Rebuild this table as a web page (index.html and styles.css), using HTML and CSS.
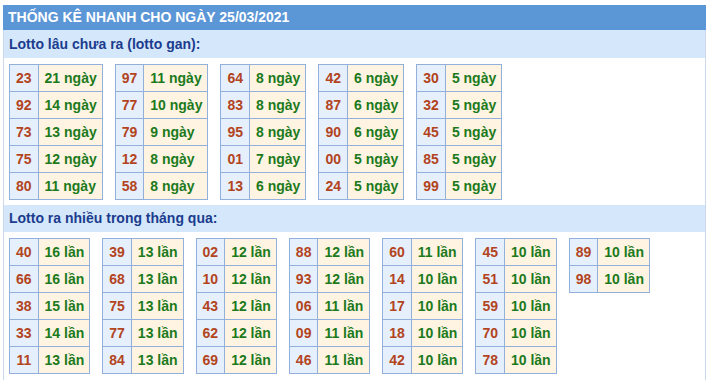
FILE: index.html
```html
<!DOCTYPE html>
<html lang="vi">
<head>
<meta charset="utf-8">
<link rel="stylesheet" href="styles.css">
</head>
<body>
<div class="box">
  <div class="title">THỐNG KÊ NHANH CHO NGÀY 25/03/2021</div>
  <div class="sub first">Lotto lâu chưa ra (lotto gan):</div>
  <div class="tables">
    <table><tr><td class="n">23</td><td class="v">21 ngày</td></tr><tr><td class="n">92</td><td class="v">14 ngày</td></tr><tr><td class="n">73</td><td class="v">13 ngày</td></tr><tr><td class="n">75</td><td class="v">12 ngày</td></tr><tr><td class="n">80</td><td class="v">11 ngày</td></tr></table>
    <table><tr><td class="n">97</td><td class="v">11 ngày</td></tr><tr><td class="n">77</td><td class="v">10 ngày</td></tr><tr><td class="n">79</td><td class="v">9 ngày</td></tr><tr><td class="n">12</td><td class="v">8 ngày</td></tr><tr><td class="n">58</td><td class="v">8 ngày</td></tr></table>
    <table><tr><td class="n">64</td><td class="v">8 ngày</td></tr><tr><td class="n">83</td><td class="v">8 ngày</td></tr><tr><td class="n">95</td><td class="v">8 ngày</td></tr><tr><td class="n">01</td><td class="v">7 ngày</td></tr><tr><td class="n">13</td><td class="v">6 ngày</td></tr></table>
    <table><tr><td class="n">42</td><td class="v">6 ngày</td></tr><tr><td class="n">87</td><td class="v">6 ngày</td></tr><tr><td class="n">90</td><td class="v">6 ngày</td></tr><tr><td class="n">00</td><td class="v">5 ngày</td></tr><tr><td class="n">24</td><td class="v">5 ngày</td></tr></table>
    <table><tr><td class="n">30</td><td class="v">5 ngày</td></tr><tr><td class="n">32</td><td class="v">5 ngày</td></tr><tr><td class="n">45</td><td class="v">5 ngày</td></tr><tr><td class="n">85</td><td class="v">5 ngày</td></tr><tr><td class="n">99</td><td class="v">5 ngày</td></tr></table>
  </div>
  <div class="sub">Lotto ra nhiều trong tháng qua:</div>
  <div class="tables">
    <table><tr><td class="n">40</td><td class="v">16 lần</td></tr><tr><td class="n">66</td><td class="v">16 lần</td></tr><tr><td class="n">38</td><td class="v">15 lần</td></tr><tr><td class="n">33</td><td class="v">14 lần</td></tr><tr><td class="n">11</td><td class="v">13 lần</td></tr></table>
    <table><tr><td class="n">39</td><td class="v">13 lần</td></tr><tr><td class="n">68</td><td class="v">13 lần</td></tr><tr><td class="n">75</td><td class="v">13 lần</td></tr><tr><td class="n">77</td><td class="v">13 lần</td></tr><tr><td class="n">84</td><td class="v">13 lần</td></tr></table>
    <table><tr><td class="n">02</td><td class="v">12 lần</td></tr><tr><td class="n">10</td><td class="v">12 lần</td></tr><tr><td class="n">43</td><td class="v">12 lần</td></tr><tr><td class="n">62</td><td class="v">12 lần</td></tr><tr><td class="n">69</td><td class="v">12 lần</td></tr></table>
    <table><tr><td class="n">88</td><td class="v">12 lần</td></tr><tr><td class="n">93</td><td class="v">12 lần</td></tr><tr><td class="n">06</td><td class="v">11 lần</td></tr><tr><td class="n">09</td><td class="v">11 lần</td></tr><tr><td class="n">46</td><td class="v">11 lần</td></tr></table>
    <table><tr><td class="n">60</td><td class="v">11 lần</td></tr><tr><td class="n">14</td><td class="v">10 lần</td></tr><tr><td class="n">17</td><td class="v">10 lần</td></tr><tr><td class="n">18</td><td class="v">10 lần</td></tr><tr><td class="n">42</td><td class="v">10 lần</td></tr></table>
    <table><tr><td class="n">45</td><td class="v">10 lần</td></tr><tr><td class="n">51</td><td class="v">10 lần</td></tr><tr><td class="n">59</td><td class="v">10 lần</td></tr><tr><td class="n">70</td><td class="v">10 lần</td></tr><tr><td class="n">78</td><td class="v">10 lần</td></tr></table>
    <table><tr><td class="n">89</td><td class="v">10 lần</td></tr><tr><td class="n">98</td><td class="v">10 lần</td></tr></table>
  </div>
</div>
</body>
</html>
```
FILE: styles.css
```css
html, body {
  margin: 0;
  padding: 0;
  background: #fff;
}
body {
  font-family: "Liberation Sans", Arial, sans-serif;
  font-size: 14px;
  font-weight: bold;
}
.box {
  margin: 5px 0 0 3px;
  width: 701px;
  height: 380px;
  border-left: 1px solid #c9d8ec;
  border-right: 1px solid #c9d8ec;
}
.title {
  background: #5b96d6;
  color: #fff;
  height: 25px;
  line-height: 25px;
  padding-left: 5px;
  margin: 0 -1px;
}
.sub {
  background: #d5e8fb;
  color: #1b3c8e;
  height: 27px;
  line-height: 27px;
  padding-left: 5px;
}
.sub.first {
  height: 28px;
  line-height: 28px;
}
.tables {
  display: flex;
  align-items: flex-start;
  gap: 12px;
  padding: 6px 0 5px 5px;
}
table {
  border-collapse: collapse;
}
td {
  border: 1px solid #93afdc;
  height: 26px;
  line-height: 26px;
  padding: 0 6px;
  white-space: nowrap;
}
td.n {
  background: #e6effc;
  color: #b2441e;
  text-align: center;
}
td.v {
  background: #fff4e2;
  color: #1c7a1c;
  padding: 0 5px 0 6px;
}
```
